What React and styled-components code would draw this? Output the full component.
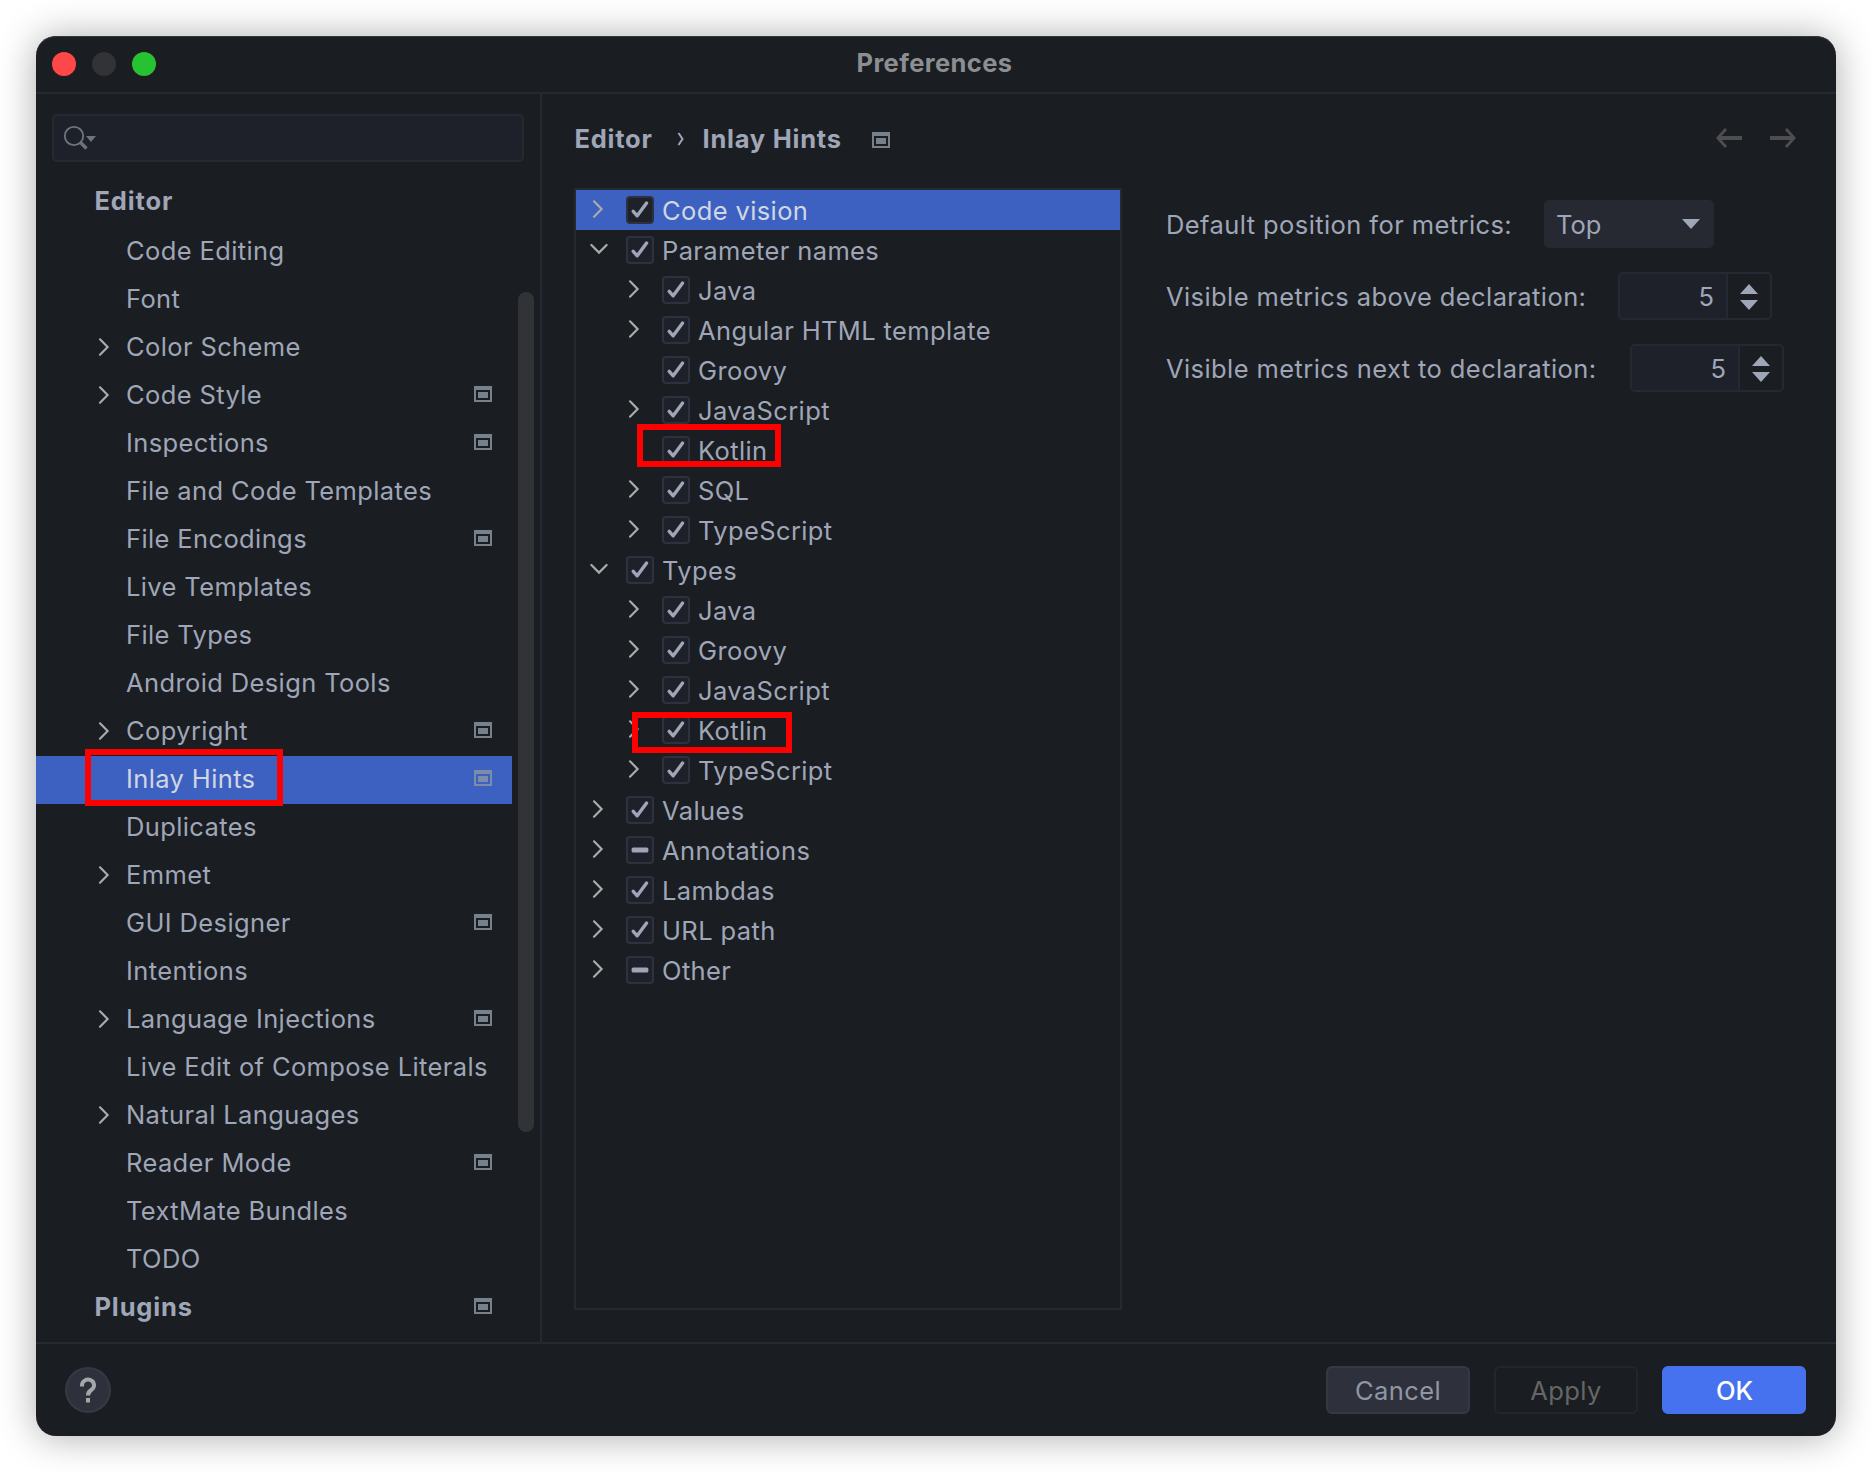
import React from "react";
import styled, { createGlobalStyle, css } from "styled-components";

const c = {
  bg: "#1a1d21",
  line: "#262932",
  field: "#1f212a",
  text: "#9fa6b7",
  select: "#3d61c1",
  icon: "#76818b",
  chevron: "#aaaaaa",
};

const Global = createGlobalStyle`
  * { box-sizing: border-box; }
  html, body { margin: 0; background: #fff; }
  body {
    width: 1872px; height: 1472px; overflow: hidden;
    font-family: Inter, "Liberation Sans", sans-serif;
    font-size: 25.5px; color: ${c.text};
    -webkit-font-smoothing: antialiased;
  }
`;

const Page = styled.div`
  width: 1872px;
  height: 1472px;
  padding: 36px;
`;
const Window = styled.main`
  width: 1800px;
  height: 1400px;
  display: flex;
  flex-direction: column;
  background: ${c.bg};
  border-radius: 20px;
  overflow: hidden;
  box-shadow: 0 1px 38px rgba(0, 0, 0, 0.33), inset 0 1px 0 #343b3f;
`;
const TitleBar = styled.header`
  flex: none;
  height: 58px;
  display: grid;
  grid-template-columns: 136px 1fr 155px;
  align-items: center;
  padding: 0 0 0 16px;
  border-bottom: 2px solid ${c.line};
`;
const Lights = styled.div`
  display: flex;
  gap: 16px;
`;
const Light = styled.span`
  width: 24px;
  height: 24px;
  border-radius: 50%;
  background: ${(p) => p.$color};
`;
const Title = styled.h1`
  margin: 0;
  padding-bottom: 2px;
  text-align: center;
  font-size: 25.5px;
  font-weight: 700;
  letter-spacing: 0.4px;
  line-height: 52px;
  color: #8c8e92;
`;
const Body = styled.div`
  flex: none;
  height: 1248px;
  display: flex;
`;
const Sidebar = styled.aside`
  flex: none;
  width: 506px;
  border-right: 2px solid ${c.line};
  padding-top: 20px;
`;
const Search = styled.div`
  width: 472px;
  height: 48px;
  margin-left: 16px;
  padding-left: 9px;
  display: flex;
  align-items: center;
  border: 2px solid ${c.line};
  border-radius: 5px;
  background: ${c.field};
`;
const NavArea = styled.div`
  margin-top: 16px;
  display: flex;
`;
const NavList = styled.nav`
  width: 476px;
`;
const NavRow = styled.div`
  height: ${(p) => (p.$first ? 50 : 48)}px;
  display: flex;
  align-items: center;
  padding: 0 20px 0 58px;
  padding-bottom: ${(p) => (p.$first ? 4 : 2)}px;
  background: ${(p) => (p.$selected ? c.select : "transparent")};
  color: ${(p) => (p.$selected ? "#d1d6e2" : c.text)};
`;
const NavToggle = styled.span`
  flex: none;
  display: flex;
  width: 32px;
  padding: 0 0 1px 4px;
`;
const IconSlot = styled.span`
  display: flex;
  padding-bottom: 2px;
`;
const Label = styled.span`
  flex: 1;
  white-space: nowrap;
  line-height: 30px;
  padding-top: ${(p) => p.$drop ?? 0}px;
  padding-left: ${(p) => (p.$bold ? 0.5 : 0)}px;
  letter-spacing: ${(p) => (p.$bold ? 0.85 : 0.38)}px;
  font-weight: ${(p) => (p.$bold ? 700 : 400)};
`;
const ScrollTrack = styled.div`
  padding: 114px 0 0 6px;
`;
const ScrollThumb = styled.div`
  width: 16px;
  height: 840px;
  border-radius: 8px;
  background: #323336;
`;
const Content = styled.section`
  flex: 1;
  padding: 18px 0 0 32px;
`;
const Crumbs = styled.div`
  height: 56px;
  display: flex;
  align-items: center;
  padding-right: 40px;
`;
const Crumb = styled.h2`
  margin: 0;
  width: ${(p) => p.$width}px;
  padding: 0 0 2px 0.5px;
  font-size: 25.5px;
  font-weight: 700;
  line-height: 30px;
  white-space: nowrap;
  letter-spacing: 0.75px;
`;
const Separator = styled.span`
  display: flex;
  width: 25px;
  padding-bottom: 2px;
`;
const History = styled.div`
  display: flex;
  gap: 28px;
  margin-left: auto;
  padding-bottom: 4px;
`;
const Columns = styled.div`
  display: flex;
  padding-top: 20px;
`;
const Tree = styled.div`
  width: 548px;
  height: 1122px;
  border: 2px solid ${c.line};
`;
const TreeRow = styled.div`
  height: 40px;
  display: flex;
  align-items: center;
  padding-left: ${(p) => 14 + p.$level * 36}px;
  background: ${(p) => (p.$selected ? c.select : "transparent")};
  color: ${(p) => (p.$selected ? "#d1d6e2" : c.text)};
`;
const TreeToggle = styled.span`
  flex: none;
  width: 36px;
  display: flex;
  padding-bottom: 2px;
  padding-left: ${(p) => (p.$open ? 0 : 2)}px;
`;
const Box = styled.span`
  flex: none;
  display: flex;
  width: 28px;
  height: 28px;
  margin-right: 8px;
  border: 2px solid #2f323e;
  border-radius: 4px;
  background: ${c.field};
`;
const Settings = styled.div`
  flex: 1;
  padding: 12px 0 0 44px;
  display: flex;
  flex-direction: column;
  gap: 24px;
`;
const Setting = styled.div`
  height: 48px;
  display: flex;
  align-items: center;
`;
const SettingName = styled.label`
  width: ${(p) => p.$width}px;
  white-space: nowrap;
  letter-spacing: 0.41px;
`;
const Combo = styled.div`
  width: 170px;
  height: 48px;
  display: flex;
  align-items: center;
  justify-content: space-between;
  padding: 0 14px 0 12px;
  border-radius: 5px;
  background: ${c.line};
`;
const Spinner = styled.div`
  width: 154px;
  height: 48px;
  display: flex;
  overflow: hidden;
  border: 2px solid ${c.line};
  border-radius: 5px;
`;
const SpinnerValue = styled.div`
  width: 108px;
  display: flex;
  align-items: center;
  justify-content: flex-end;
  padding-right: 12px;
  background: ${c.field};
  border-right: 2px solid ${c.line};
`;
const SpinnerArrows = styled.div`
  flex: 1;
  display: flex;
  align-items: center;
  justify-content: center;
  padding-top: 2px;
`;
const Footer = styled.footer`
  height: 94px;
  display: flex;
  align-items: center;
  padding: 0 30px 0 29px;
  border-top: 2px solid ${c.line};
`;
const Help = styled.button`
  width: 46px;
  height: 46px;
  padding: 0;
  display: grid;
  place-items: center;
  border: 2px solid #363943;
  border-radius: 50%;
  background: #2e313b;
`;
const Actions = styled.div`
  display: flex;
  gap: 24px;
  margin-left: auto;
`;
const variants = {
  normal: css`
    background: #2e313b;
    border-color: #363943;
    color: #8f96a6;
  `,
  disabled: css`
    background: transparent;
    border-color: #23262b;
    color: #666666;
  `,
  primary: css`
    background: #4672f0;
    border-color: #4672f0;
    color: #fff;
    font-weight: 500;
    letter-spacing: 0;
    padding-left: 1px;
  `,
};
const Button = styled.button`
  width: 144px;
  height: 48px;
  padding: 0;
  border: 2px solid;
  border-radius: 6px;
  font: inherit;
  letter-spacing: 0.4px;
  ${(p) => variants[p.$kind]}
`;
const Marker = styled.div`
  position: absolute;
  left: ${(p) => p.$x}px;
  top: ${(p) => p.$y}px;
  width: ${(p) => p.$w}px;
  height: ${(p) => p.$h}px;
  border: 6px solid #fe0000;
`;

const Right = () => (
  <svg width="12" height="20" viewBox="0 0 12 20">
    <path d="M2 2.3 L9.6 10 L2 17.7" fill="none" stroke={c.chevron} strokeWidth="2.2" strokeLinecap="round" />
  </svg>
);
const Down = () => (
  <svg width="20" height="12" viewBox="0 0 20 12">
    <path d="M1.4 2 L9 9.6 L16.6 2" fill="none" stroke={c.chevron} strokeWidth="2.2" strokeLinecap="round" />
  </svg>
);
const ProjectIcon = ({ color = c.icon }) => (
  <svg width="18" height="16" viewBox="0 0 18 16" fill={color}>
    <path fillRule="evenodd" d="M0 0H18V16H0Z M2 4V14H16V4Z" />
    <path d="M4 6H14V12H4Z" />
  </svg>
);
const Mark = ({ partial }) => (
  <svg width="24" height="24" viewBox="2 2 24 24" fill="none" stroke={c.text} strokeLinecap="round">
    {partial ? (
      <rect x="5.6" y="11.4" width="16.8" height="5.2" rx="1.6" fill={c.text} stroke="none" />
    ) : (
      <path d="M7.2 15.3 L11.2 19.8 L20.6 7" strokeWidth="3.4" strokeLinejoin="round" />
    )}
  </svg>
);
const SearchIcon = () => (
  <svg width="34" height="28" viewBox="0 0 34 28" fill="none" stroke="#6c7679">
    <circle cx="11" cy="12" r="9.2" strokeWidth="1.8" />
    <path d="M17.5 18.5 L23.5 24.5" strokeWidth="3.2" />
    <path d="M23 12H33L28 18Z" fill="#6c7679" stroke="none" />
  </svg>
);
const Back = ({ flip }) => (
  <svg width="26" height="20" viewBox="0 0 26 20" fill="none" stroke="#4e4e4e" transform={flip ? "scale(-1 1)" : undefined}>
    <path d="M10 1 L1.8 10 L10 19" strokeWidth="2.8" />
    <path d="M3 10H26" strokeWidth="4" />
  </svg>
);
const Steps = () => (
  <svg width="18" height="26" viewBox="0 0 18 26" fill={c.text}>
    <path d="M9 0L18 10H0Z M0 16H18L9 26Z" />
  </svg>
);

const nav = [
  { t: "Editor", top: true },
  { t: "Code Editing" },
  { t: "Font" },
  { t: "Color Scheme", more: true },
  { t: "Code Style", more: true, p: true },
  { t: "Inspections", p: true },
  { t: "File and Code Templates" },
  { t: "File Encodings", p: true },
  { t: "Live Templates" },
  { t: "File Types" },
  { t: "Android Design Tools" },
  { t: "Copyright", more: true, p: true },
  { t: "Inlay Hints", p: true, selected: true },
  { t: "Duplicates" },
  { t: "Emmet", more: true },
  { t: "GUI Designer", p: true },
  { t: "Intentions" },
  { t: "Language Injections", more: true, p: true },
  { t: "Live Edit of Compose Literals" },
  { t: "Natural Languages", more: true },
  { t: "Reader Mode", p: true },
  { t: "TextMate Bundles" },
  { t: "TODO" },
  { t: "Plugins", top: true, p: true },
];

const tree = [
  ["Code vision", 0, "closed"],
  ["Parameter names", 0, "open"],
  ["Java", 1, "closed"],
  ["Angular HTML template", 1, "closed"],
  ["Groovy", 1, "leaf"],
  ["JavaScript", 1, "closed"],
  ["Kotlin", 1, "leaf"],
  ["SQL", 1, "closed"],
  ["TypeScript", 1, "closed"],
  ["Types", 0, "open"],
  ["Java", 1, "closed"],
  ["Groovy", 1, "closed"],
  ["JavaScript", 1, "closed"],
  ["Kotlin", 1, "closed"],
  ["TypeScript", 1, "closed"],
  ["Values", 0, "closed"],
  ["Annotations", 0, "closed", true],
  ["Lambdas", 0, "closed"],
  ["URL path", 0, "closed"],
  ["Other", 0, "closed", true],
];

export default function App() {
  return (
    <Page>
      <Global />
      <Window>
        <TitleBar>
          <Lights>
            <Light $color="#ff4747" />
            <Light $color="#323336" />
            <Light $color="#28c131" />
          </Lights>
          <Title>Preferences</Title>
        </TitleBar>
        <Body>
          <Sidebar>
            <Search>
              <SearchIcon />
            </Search>
            <NavArea>
              <NavList>
                {nav.map((n, i) => (
                  <NavRow key={n.t} $first={i === 0} $selected={n.selected}>
                    {!n.top && <NavToggle>{n.more && <Right />}</NavToggle>}
                    <Label $bold={n.top}>{n.t}</Label>
                    {n.p && (
                      <IconSlot>
                        <ProjectIcon color={n.selected ? "#7c8ca9" : undefined} />
                      </IconSlot>
                    )}
                  </NavRow>
                ))}
              </NavList>
              <ScrollTrack>
                <ScrollThumb />
              </ScrollTrack>
            </NavArea>
          </Sidebar>
          <Content>
            <Crumbs>
              <Crumb $width={103}>Editor</Crumb>
              <Separator>
                <svg width="8" height="16" viewBox="0 0 8 16">
                  <path d="M1.5 2 L5.5 8 L1.5 14" fill="none" stroke={c.text} strokeWidth="2" />
                </svg>
              </Separator>
              <Crumb $width={170}>Inlay Hints</Crumb>
              <ProjectIcon />
              <History>
                <Back />
                <Back flip />
              </History>
            </Crumbs>
            <Columns>
              <Tree>
                {tree.map(([name, level, state, partial], i) => (
                  <TreeRow key={i} $level={level} $selected={i === 0}>
                    <TreeToggle $open={state === "open"}>
                      {state === "open" && <Down />}
                      {state === "closed" && <Right />}
                    </TreeToggle>
                    <Box>
                      <Mark partial={partial} />
                    </Box>
                    <Label $drop={2}>{name}</Label>
                  </TreeRow>
                ))}
              </Tree>
              <Settings>
                <Setting>
                  <SettingName $width={378}>Default position for metrics:</SettingName>
                  <Combo>
                    Top
                    <svg width="18" height="10" viewBox="0 0 18 10" fill={c.text}>
                      <path d="M0 0H18L9 10Z" />
                    </svg>
                  </Combo>
                </Setting>
                <Setting>
                  <SettingName $width={452}>Visible metrics above declaration:</SettingName>
                  <Spinner>
                    <SpinnerValue>5</SpinnerValue>
                    <SpinnerArrows>
                      <Steps />
                    </SpinnerArrows>
                  </Spinner>
                </Setting>
                <Setting>
                  <SettingName $width={464}>Visible metrics next to declaration:</SettingName>
                  <Spinner>
                    <SpinnerValue>5</SpinnerValue>
                    <SpinnerArrows>
                      <Steps />
                    </SpinnerArrows>
                  </Spinner>
                </Setting>
              </Settings>
            </Columns>
          </Content>
        </Body>
        <Footer>
          <Help aria-label="Help">
            <svg width="18" height="26" viewBox="0 0 18 26" fill="none" stroke="#a5a6a8" strokeWidth="4">
              <path d="M3 9.4 V8.2 A6 5.6 0 1 1 13.4 12 C10.4 14.2 9 15 9 18.6" />
              <path d="M9 21V25.4" />
            </svg>
          </Help>
          <Actions>
            <Button $kind="normal">Cancel</Button>
            <Button $kind="disabled">Apply</Button>
            <Button $kind="primary">OK</Button>
          </Actions>
        </Footer>
      </Window>
      <Marker $x={85} $y={749} $w={198} $h={57} />
      <Marker $x={637} $y={424} $w={144} $h={43} />
      <Marker $x={632} $y={712} $w={160} $h={41} />
    </Page>
  );
}
